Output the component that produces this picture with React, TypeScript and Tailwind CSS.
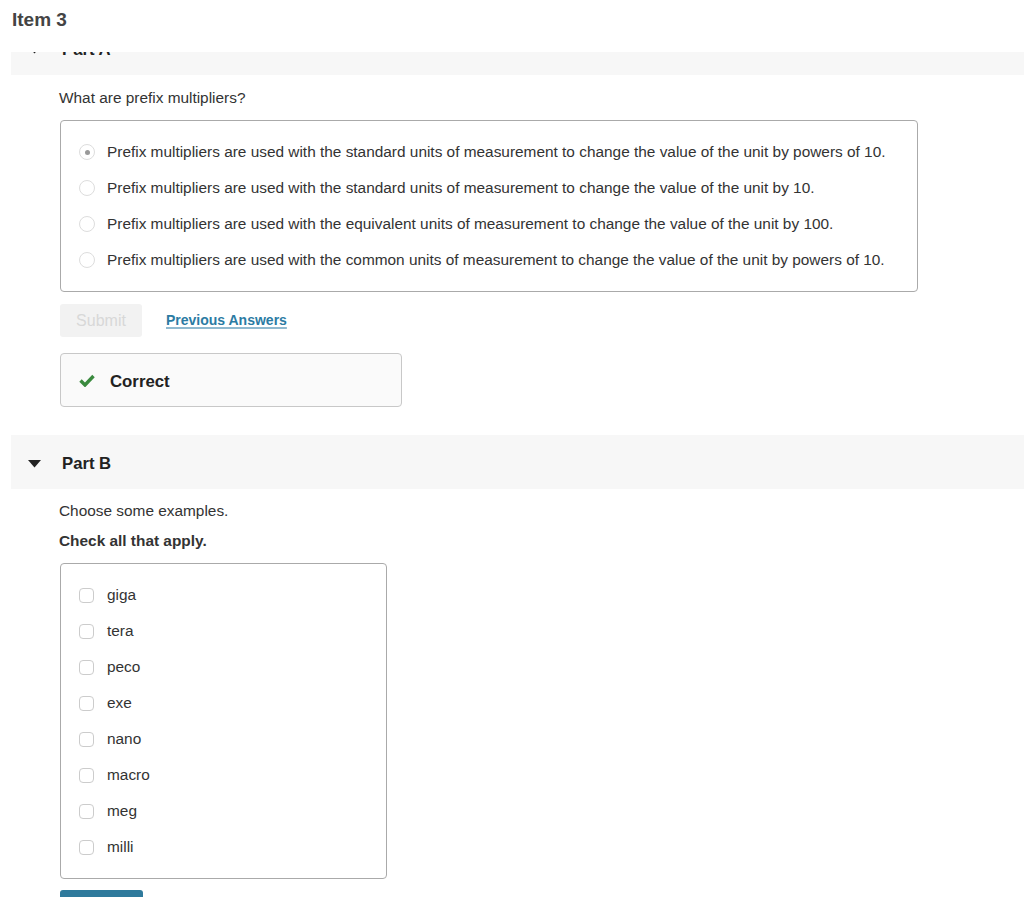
const RADIO_OPTIONS = [
  "Prefix multipliers are used with the standard units of measurement to change the value of the unit by powers of 10.",
  "Prefix multipliers are used with the standard units of measurement to change the value of the unit by 10.",
  "Prefix multipliers are used with the equivalent units of measurement to change the value of the unit by 100.",
  "Prefix multipliers are used with the common units of measurement to change the value of the unit by powers of 10.",
];

const CHECK_OPTIONS = ["giga", "tera", "peco", "exe", "nano", "macro", "meg", "milli"];

function Caret() {
  return (
    <svg width="13" height="8" viewBox="0 0 13 8" className="shrink-0">
      <path d="M0 0 H13 L6.5 7.5 Z" fill="#222" />
    </svg>
  );
}

function PartHeader({ label }: { label: string }) {
  return (
    <div className="ml-[11px] flex h-[54px] items-center bg-[#f7f7f7] pl-[17px] pt-[3px]">
      <Caret />
      <span className="ml-[21px] text-[16.7px] font-bold text-[#222]">{label}</span>
    </div>
  );
}

export default function App() {
  return (
    <div
      className="min-h-[897px] bg-white text-[15.4px] text-[#333]"
      style={{ fontFamily: '"Liberation Sans", Arial, sans-serif' }}
    >
      <header className="flex h-[52px] items-start pl-[12px] pt-[6px]">
        <h1 className="text-[19px] font-bold text-[#444]">Item 3</h1>
      </header>

      {/* Part A header, scrolled mostly under the page header */}
      <div className="h-[23px] overflow-hidden">
        <div className="-mt-[31px]">
          <PartHeader label="Part A" />
        </div>
      </div>

      <section className="pl-[59px]">
        <p className="mt-[13px] leading-[20px]">What are prefix multipliers?</p>

        <div className="mt-[12px] ml-[1px] w-[858px] rounded-[4px] border border-[#aaa] py-[13px]">
          {RADIO_OPTIONS.map((t, i) => (
            <label key={i} className="flex h-[36px] items-center pl-[18px]">
              <span className="flex h-[16px] w-[16px] shrink-0 items-center justify-center rounded-full border border-[#ddd] bg-white">
                {i === 0 && <span className="h-[5px] w-[5px] rounded-full bg-[#999]" />}
              </span>
              <span className="ml-[12px] leading-[20px]">{t}</span>
            </label>
          ))}
        </div>

        <div className="mt-[12px] ml-[1px] flex items-center">
          <button className="h-[33px] w-[82px] rounded-[3px] bg-[#f2f2f2] text-[16px] text-[#d8d8d8]">
            Submit
          </button>
          <a className="ml-[24px] text-[14px] font-bold text-[#2b7ba3] underline decoration-[#8fb9cf] decoration-2 underline-offset-2">
            Previous Answers
          </a>
        </div>

        <div className="mt-[16px] ml-[1px] flex h-[54px] w-[342px] items-center rounded-[4px] border border-[#c8c8c8] bg-[#fafafa] pl-[18px] pt-[3px]">
          <svg width="16" height="13" viewBox="0 0 16 13" className="-mt-[3px]">
            <path d="M1.5 6.5 L6 11 L14.5 2" fill="none" stroke="#3a8a3e" strokeWidth="3.4" />
          </svg>
          <span className="ml-[15px] text-[16.8px] font-bold text-[#222]">Correct</span>
        </div>
      </section>

      <div className="mt-[28px]">
        <PartHeader label="Part B" />
      </div>

      <section className="pl-[59px]">
        <p className="mt-[12px] leading-[20px]">Choose some examples.</p>
        <p className="mt-[10px] font-bold leading-[20px]">Check all that apply.</p>

        <div className="mt-[12px] ml-[1px] w-[327px] rounded-[4px] border border-[#aaa] py-[13px]">
          {CHECK_OPTIONS.map((t) => (
            <label key={t} className="flex h-[36px] items-center pl-[18px]">
              <span className="h-[15px] w-[15px] shrink-0 rounded-[4px] border border-[#ccc] bg-white" />
              <span className="ml-[13px] leading-[20px]">{t}</span>
            </label>
          ))}
        </div>

        <button className="mt-[11px] ml-[1px] h-[33px] w-[83px] rounded-[3px] bg-[#2f7a9c] text-[16px] text-white">
          Submit
        </button>
      </section>
    </div>
  );
}
